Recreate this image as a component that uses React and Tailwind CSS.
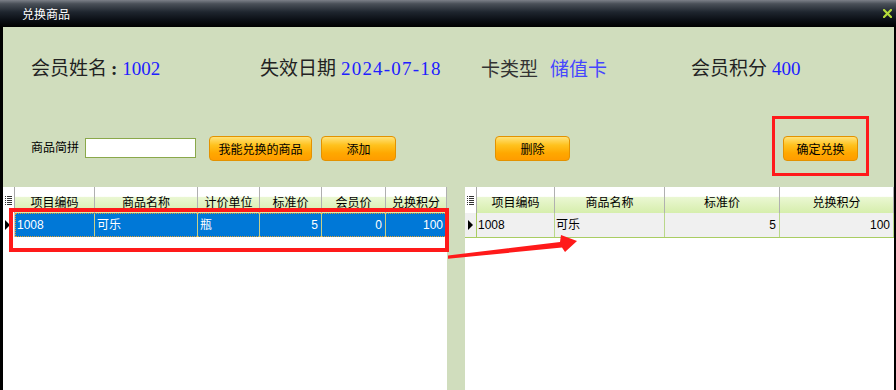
import React from "react";

const CJK = { fontFamily: '"Noto Sans CJK SC", "Liberation Sans", sans-serif' };
const SERIF = { fontFamily: '"Liberation Serif", "Noto Sans CJK SC", serif' };
const CELL = { fontFamily: '"Liberation Sans", "Noto Sans CJK SC", sans-serif' };

function ListIcon() {
  return (
    <svg width="7" height="9" viewBox="0 0 7 9">
      <rect x="0" y="0" width="1" height="1" fill="#333" />
      <rect x="2" y="0" width="5" height="1" fill="#333" />
      <rect x="0" y="2" width="1" height="1" fill="#333" />
      <rect x="2" y="2" width="5" height="1" fill="#333" />
      <rect x="0" y="4" width="1" height="1" fill="#333" />
      <rect x="2" y="4" width="5" height="1" fill="#333" />
      <rect x="0" y="6" width="1" height="1" fill="#333" />
      <rect x="2" y="6" width="5" height="1" fill="#333" />
      <rect x="0" y="8" width="1" height="1" fill="#333" />
      <rect x="2" y="8" width="5" height="1" fill="#333" />
    </svg>
  );
}

function Tri() {
  return (
    <svg width="5" height="10" viewBox="0 0 5 10">
      <polygon points="0,0 5,5 0,10" fill="#000" />
    </svg>
  );
}

function Btn({ children, w }) {
  return (
    <div
      className={`h-[25px] ${w} flex items-center justify-center rounded-[4px] border border-[#e39200] bg-[linear-gradient(to_bottom,#ffe27a_0%,#ffc21e_35%,#ffa800_70%,#ff9c00_100%)] text-[12px] text-black`}
      style={CJK}
    >
      {children}
    </div>
  );
}

function Header({ cols }) {
  return (
    <div className="flex h-[26px] bg-[linear-gradient(to_bottom,#ffffff_0%,#ffffff_36%,#eaf7d2_40%,#d6eeac_100%)]">
      <div className="w-[12px] flex items-center justify-center border-r border-[#a8a8a8] bg-white">
        <ListIcon />
      </div>
      {cols.map((c, i) => (
        <div
          key={i}
          className={`${c.w} flex items-end justify-center pb-[2px] border-r border-[#b0b0b0] text-[12px] text-black`}
          style={CJK}
        >
          {c.t}
        </div>
      ))}
    </div>
  );
}

export default function App() {
  const leftCols = [
    { t: "项目编码", w: "w-[80px]" },
    { t: "商品名称", w: "w-[103px]" },
    { t: "计价单位", w: "w-[62px]" },
    { t: "标准价", w: "w-[62px]" },
    { t: "会员价", w: "w-[64px]" },
    { t: "兑换积分", w: "w-[61px]" },
  ];
  const rightCols = [
    { t: "项目编码", w: "w-[78px]" },
    { t: "商品名称", w: "w-[110px]" },
    { t: "标准价", w: "w-[115px]" },
    { t: "兑换积分", w: "w-[114px]" },
  ];
  const leftRow = [
    { v: "1008", a: "left" },
    { v: "可乐", a: "left" },
    { v: "瓶", a: "left" },
    { v: "5", a: "right" },
    { v: "0", a: "right" },
    { v: "100", a: "right" },
  ];
  const rightRow = [
    { v: "1008", a: "left" },
    { v: "可乐", a: "left" },
    { v: "5", a: "right" },
    { v: "100", a: "right" },
  ];

  return (
    <div className="relative w-[896px] h-[390px] overflow-hidden bg-black flex flex-col">
      {/* Title bar */}
      <div className="h-[27px] flex items-center justify-between bg-[linear-gradient(to_bottom,#7c8088_0%,#4a5058_14%,#1e252e_45%,#0a0e14_75%,#000000_100%)]">
        <span className="ml-[22px] text-[12px] text-white" style={CJK}>
          兑换商品
        </span>
        <svg className="mr-[4px] mb-[1px]" width="9" height="9" viewBox="0 0 9 9">
          <path d="M1 1 L8 8 M8 1 L1 8" stroke="#b6dc3a" strokeWidth="2.2" strokeLinecap="square" />
        </svg>
      </div>

      {/* Body */}
      <div className="flex-1 ml-[3px] mr-[2px] bg-[#d0ddbd] flex flex-col">
        {/* Info row */}
        <div className="mt-[29px] h-[24px] flex items-center text-[19px] leading-[24px] pl-[28px]">
          <div className="w-[229px] whitespace-nowrap">
            <span className="text-[#222]" style={CJK}>会员姓名</span>
            <span className="text-[#222] font-bold ml-[4px]" style={SERIF}>:</span>
            <span className="text-[#2020ff] ml-[5px]" style={SERIF}>1002</span>
          </div>
          <div className="w-[221px] whitespace-nowrap">
            <span className="text-[#222]" style={CJK}>失效日期</span>
            <span className="text-[#2020ff] ml-[5px] tracking-[1.2px]" style={SERIF}>2024-07-18</span>
          </div>
          <div className="w-[210px] whitespace-nowrap">
            <span className="text-[#333]" style={CJK}>卡类型</span>
            <span className="text-[#4646ff] ml-[12px]" style={CJK}>储值卡</span>
          </div>
          <div className="whitespace-nowrap">
            <span className="text-[#222]" style={CJK}>会员积分</span>
            <span className="text-[#2020ff] ml-[5px]" style={SERIF}>400</span>
          </div>
        </div>

        {/* Search / action row */}
        <div className="mt-[36px] h-[60px] flex items-start pl-[28px]">
          <span className="mt-[23px] text-[12px] leading-[16px] text-black" style={CJK}>
            商品简拼
          </span>
          <div className="mt-[22px] ml-[6px] w-[111px] h-[20px] bg-white border border-[#8aa84a]" />
          <div className="mt-[20px] ml-[13px]">
            <Btn w="w-[103px]">我能兑换的商品</Btn>
          </div>
          <div className="mt-[20px] ml-[9px]">
            <Btn w="w-[75px]">添加</Btn>
          </div>
          <div className="mt-[20px] ml-[99px]">
            <Btn w="w-[75px]">删除</Btn>
          </div>
          <div className="ml-[202px] h-[60px] border-[3px] border-[#ff1a1a] pt-[17px] px-[8px]">
            <Btn w="w-[75px]">确定兑换</Btn>
          </div>
        </div>

        {/* Grids */}
        <div className="mt-[11px] flex-1 flex gap-[18px]">
          {/* Left grid */}
          <div className="w-[444px] bg-white flex flex-col">
            <Header cols={leftCols} />
            <div className="flex h-[24px]">
              <div className="w-[12px] flex items-center pl-[2px] border-r border-[#c8c8c8] bg-white">
                <Tri />
              </div>
              <div className="flex-1 flex bg-[#0078d7] outline outline-1 outline-dotted outline-[#e0a030] -outline-offset-1">
                {leftRow.map((c, i) => (
                  <div
                    key={i}
                    className={`${leftCols[i].w} flex items-center ${c.a === "right" ? "justify-end pr-[3px]" : "justify-start pl-[2px]"} border-r border-[#c9cf86] text-[12px] text-white`}
                    style={CELL}
                  >
                    {c.v}
                  </div>
                ))}
              </div>
            </div>
          </div>

          {/* Right grid */}
          <div className="w-[429px] bg-white flex flex-col">
            <Header cols={rightCols} />
            <div className="flex h-[25px] bg-[#f0f0f0] border-b border-[#a9cd62]">
              <div className="w-[12px] flex items-center pl-[3px] border-r border-[#a9cd62]">
                <Tri />
              </div>
              {rightRow.map((c, i) => (
                <div
                  key={i}
                  className={`${rightCols[i].w} flex items-center ${c.a === "right" ? "justify-end pr-[3px]" : "justify-start pl-[1px]"} border-r border-[#b9d78a] text-[12px] text-black`}
                  style={CELL}
                >
                  {c.v}
                </div>
              ))}
            </div>
          </div>
        </div>
      </div>

      {/* Annotation: red box around left row */}
      <div className="absolute left-[9px] top-[208px] w-[440px] h-[44px] border-[4px] border-[#ff1a1a] pointer-events-none" />

      {/* Annotation: arrow */}
      <svg className="absolute left-0 top-0 pointer-events-none" width="896" height="390" viewBox="0 0 896 390">
        <polygon
          points="448,255.5 560,242 561,235 577,241 565,252 562,247.5 448,258.8"
          fill="#ff1a1a"
        />
      </svg>
    </div>
  );
}
